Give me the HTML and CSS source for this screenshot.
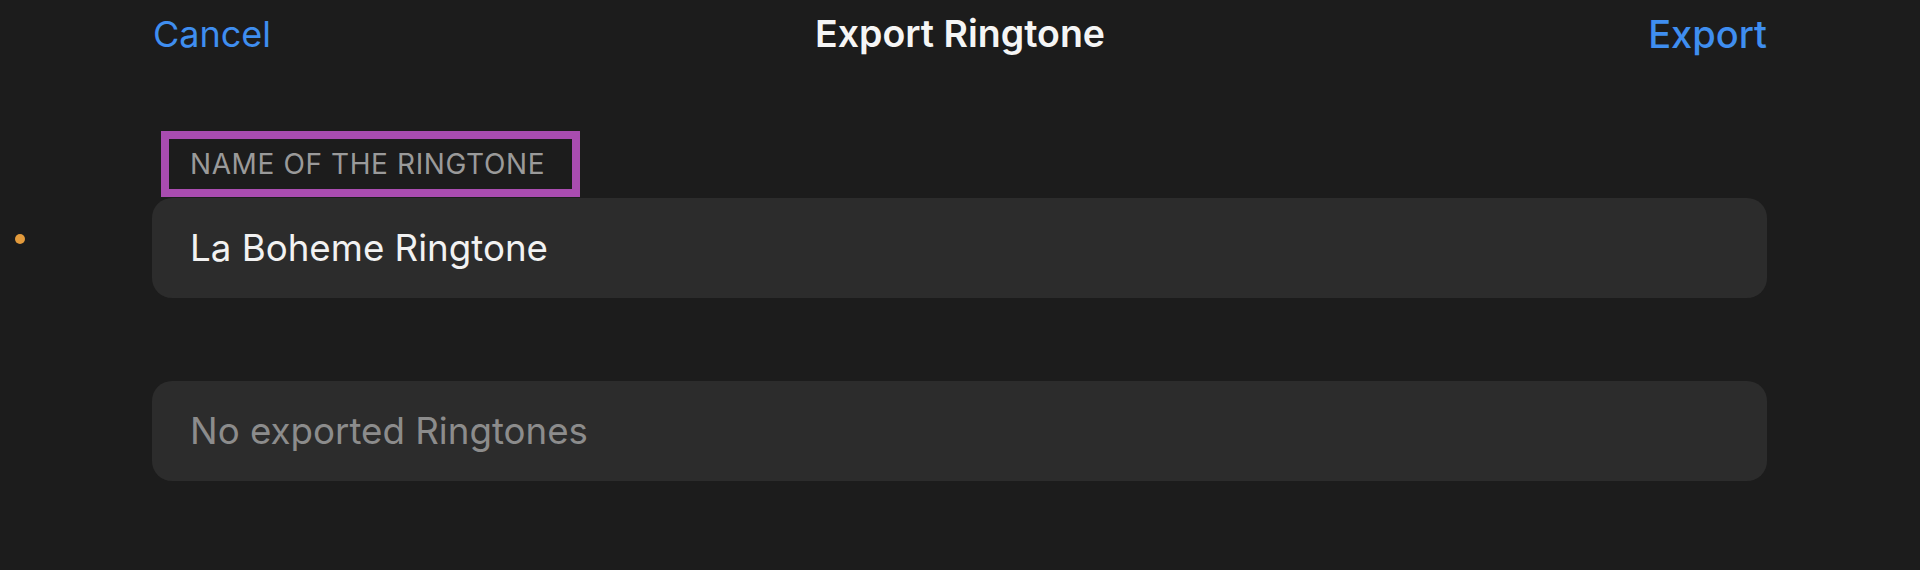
FILE: index.html
```html
<!DOCTYPE html>
<html lang="en">
<head>
<meta charset="utf-8">
<title>Export Ringtone</title>
<link rel="stylesheet" href="styles.css">
</head>
<body>
<header class="nav">
  <span class="nav-btn nav-cancel">Cancel</span>
  <span class="nav-title">Export Ringtone</span>
  <span class="nav-btn nav-export">Export</span>
</header>
<main class="content">
  <div class="row label-row">
    <span class="gutter"></span>
    <div class="label-box"><span class="section-label">NAME OF THE RINGTONE</span></div>
  </div>
  <div class="row">
    <span class="gutter"><span class="dot"></span></span>
    <div class="card"><span class="card-text">La Boheme Ringtone</span></div>
  </div>
  <div class="row list-row">
    <span class="gutter"></span>
    <div class="card"><span class="card-text placeholder">No exported Ringtones</span></div>
  </div>
</main>
</body>
</html>
```
FILE: styles.css
```css
html, body {
  margin: 0;
  padding: 0;
  background: #1c1c1c;
  height: 100%;
}
body {
  font-family: Inter, "Noto Sans", "Liberation Sans", sans-serif;
  color: #ffffff;
  overflow: hidden;
}
.nav {
  height: 68px;
  display: grid;
  grid-template-columns: 1fr auto 1fr;
  align-items: center;
  padding: 0 153px 0 153px;
  font-size: 36px;
  line-height: 1;
}
.nav-btn {
  color: #3f8ef0;
}
.nav-cancel {
  justify-self: start;
}
.nav-export {
  justify-self: end;
  font-weight: 500;
  font-size: 38px;
}
.nav-title {
  font-weight: 600;
  font-size: 37.5px;
  color: #f5f5f5;
}
.content {
  display: flex;
  flex-direction: column;
}
.row {
  display: grid;
  grid-template-columns: 152px 1615px;
  align-items: center;
}
.label-row {
  margin-top: 63px;
  margin-bottom: 1px;
}
.list-row {
  margin-top: 83px;
}
.gutter {
  display: flex;
  align-items: center;
  height: 100%;
}
.dot {
  width: 10px;
  height: 10px;
  border-radius: 50%;
  background: #e29a3c;
  margin-left: 15px;
  margin-top: -18px;
}
.label-box {
  justify-self: start;
  margin-left: 9px;
  border: 8px solid #a94cb0;
  padding: 0 27px 0 21px;
  height: 50px;
  display: flex;
  align-items: center;
  background: #1c1c1c;
}
.section-label {
  font-size: 28px;
  color: #9a9a9a;
  letter-spacing: 0.6px;
  font-weight: 400;
}
.card {
  height: 100px;
  border-radius: 20px;
  background: #2c2c2c;
  display: flex;
  align-items: center;
  padding-left: 38px;
}
.card-text {
  font-size: 36.7px;
  color: #f2f2f2;
  margin-top: -2px;
}
.card-text.placeholder {
  color: #8c8c8c;
}
```
